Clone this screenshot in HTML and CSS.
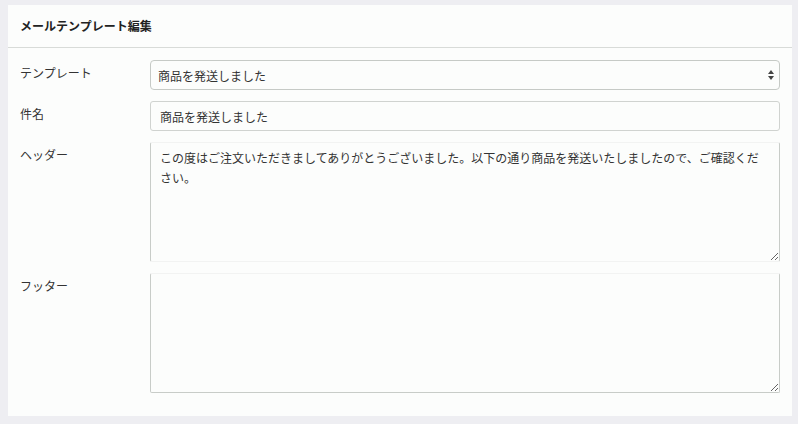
FILE: index.html
```html
<!DOCTYPE html>
<html lang="ja">
<head>
<meta charset="utf-8">
<title>メールテンプレート編集</title>
<link rel="stylesheet" href="styles.css">
</head>
<body>
<div class="card">
  <div class="card-header">メールテンプレート編集</div>
  <div class="card-body">
    <div class="row">
      <label class="label">テンプレート</label>
      <div class="field select-wrap">
        <select class="control select">
          <option>商品を発送しました</option>
        </select>
        <svg class="select-arrows" width="8" height="12" viewBox="0 0 8 12"><path d="M4 1 L7 5 L1 5 Z M4 11 L7 7 L1 7 Z" fill="#444"/></svg>
      </div>
    </div>
    <div class="row">
      <label class="label">件名</label>
      <div class="field">
        <input class="control input" type="text" value="商品を発送しました">
      </div>
    </div>
    <div class="row">
      <label class="label">ヘッダー</label>
      <div class="field">
        <textarea class="control textarea ta-header">この度はご注文いただきましてありがとうございました。以下の通り商品を発送いたしましたので、ご確認ください。</textarea>
      </div>
    </div>
    <div class="row">
      <label class="label">フッター</label>
      <div class="field">
        <textarea class="control textarea ta-footer"></textarea>
      </div>
    </div>
  </div>
</div>
</body>
</html>
```

FILE: styles.css
```css
html, body {
  margin: 0;
  padding: 0;
}
body {
  background: #eeeef2;
  font-family: "Noto Sans CJK JP", "Noto Sans", sans-serif;
  font-size: 12px;
  color: #333;
  width: 798px;
  height: 424px;
  overflow: hidden;
  padding: 5px 6px 0 8px;
  box-sizing: border-box;
}
.card {
  background: #fcfdfc;
  height: 411px;
  display: flex;
  flex-direction: column;
}
.card-header {
  height: 42px;
  line-height: 42px;
  padding: 0 12px;
  font-weight: bold;
  font-size: 12px;
  color: #222;
  border-bottom: 1px solid #d8dbd8;
}
.card-body {
  padding: 12px 12px 0 12px;
  display: flex;
  flex-direction: column;
  gap: 11px;
}
.row {
  display: flex;
  align-items: flex-start;
}
.label {
  width: 130px;
  flex: none;
  padding-top: 4px;
  line-height: 18px;
  color: #333;
}
.field {
  flex: 1;
  position: relative;
}
.control {
  display: block;
  width: 100%;
  box-sizing: border-box;
  font-family: "Noto Sans CJK JP", "Noto Sans", sans-serif;
  font-size: 12px;
  color: #333;
  background: #fcfdfc;
  margin: 0;
  outline: none;
}
.select {
  height: 30px;
  border: 1px solid #c6cac6;
  border-radius: 4px;
  padding: 0 20px 0 7px;
  -webkit-appearance: none;
  appearance: none;
}
.select-arrows {
  position: absolute;
  right: 5px;
  top: 9px;
}
.input {
  height: 30px;
  border: 1px solid #d0d3d0;
  border-radius: 3px;
  padding: 0 9px;
}
.textarea {
  height: 120px;
  border: 1px solid #c8ccc8;
  border-radius: 2px;
  padding: 5px 9px;
  line-height: 20px;
  resize: vertical;
}
.ta-header {
  border-top-color: #f2f3f2;
  border-bottom-color: #f2f3f2;
}
.ta-footer {
  border-top-color: #f2f3f2;
}
```
